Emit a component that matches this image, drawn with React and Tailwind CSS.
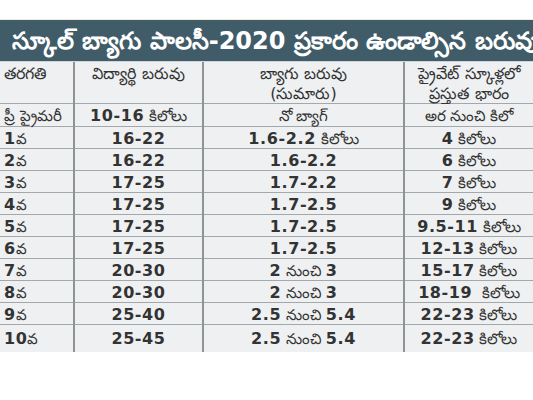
import React from 'react';

const rows = [
    ['ప్రీ ప్రైమరీ', '10-16 కిలోలు', 'నో బ్యాగ్', 'అర నుంచి కిలో'],
    ['1వ', '16-22', '1.6-2.2 కిలోలు', '4 కిలోలు'],
    ['2వ', '16-22', '1.6-2.2', '6 కిలోలు'],
    ['3వ', '17-25', '1.7-2.2', '7 కిలోలు'],
    ['4వ', '17-25', '1.7-2.5', '9 కిలోలు'],
    ['5వ', '17-25', '1.7-2.5', '9.5-11 కిలోలు'],
    ['6వ', '17-25', '1.7-2.5', '12-13 కిలోలు'],
    ['7వ', '20-30', '2 నుంచి 3', '15-17 కిలోలు'],
    ['8వ', '20-30', '2 నుంచి 3', '18-19  కిలోలు'],
    ['9వ', '25-40', '2.5 నుంచి 5.4', '22-23 కిలోలు'],
    ['10వ', '25-45', '2.5 నుంచి 5.4', '22-23 కిలోలు'],
];

const cols = 'grid grid-cols-[75px_129px_201px_1fr]';

// digits bold, telugu words regular
const Cell = ({ text }) => {
    const parts = text.split(/([0-9.\-]+)/).filter(Boolean);
    return (
        <span className="whitespace-pre">
            {parts.map((p, i) =>
                /^[0-9.\-]+$/.test(p)
                    ? <span key={i} className="font-bold text-[16px] tracking-[0.6px]">{p}</span>
                    : <span key={i} className="font-normal text-[15px]">{p}</span>
            )}
        </span>
    );
};

const App = () => {
    return (
        <div className="w-[533px] h-[400px] bg-white overflow-hidden text-[#333] font-['DejaVu_Sans','Noto_Sans',sans-serif]">
            {/* top strip, cut off line of the article */}
            <div className="h-[20px] border-b border-[#f1ecda]" />

            {/* title bar */}
            <div className="h-[42px] bg-[#3f5c68] flex items-center pl-3 overflow-hidden border-b border-[#cfd6d9]">
                <h1 className="text-white text-[24px] font-bold whitespace-nowrap leading-none">
                    స్కూల్ బ్యాగు పాలసీ-2020 ప్రకారం ఉండాల్సిన బరువు
                </h1>
            </div>

            {/* table */}
            <div className="bg-[#eef0f1]">
                <div className={`${cols} h-[42px] border-b border-[#a3a8ab] text-[16px] leading-[20px]`}>
                    <div className="border-r-2 border-[#8e9396] pl-1 pt-0.5 whitespace-nowrap">తరగతి</div>
                    <div className="border-r-2 border-[#8e9396] text-center pt-0.5 whitespace-nowrap">విద్యార్థి బరువు</div>
                    <div className="border-r-2 border-[#8e9396] text-center pt-0.5">
                        <div>బ్యాగు బరువు</div>
                        <div>(సుమారు)</div>
                    </div>
                    <div className="text-center pt-0.5 whitespace-nowrap">
                        <div>ప్రైవేట్ స్కూళ్లలో</div>
                        <div>ప్రస్తుత భారం</div>
                    </div>
                </div>
                {rows.map((r, i) => (
                    <div
                        key={i}
                        className={`${cols} ${i === 0 ? 'h-[23px]' : 'h-[22px]'} ${i === rows.length - 1 ? 'h-[27px]' : 'border-b border-[#a3a8ab]'} items-stretch`}
                    >
                        <div className="border-r-2 border-[#8e9396] pl-1 flex items-center whitespace-nowrap"><Cell text={r[0]} /></div>
                        <div className="border-r-2 border-[#8e9396] flex items-center justify-center whitespace-nowrap"><Cell text={r[1]} /></div>
                        <div className="border-r-2 border-[#8e9396] flex items-center justify-center whitespace-nowrap"><Cell text={r[2]} /></div>
                        <div className="flex items-center justify-center whitespace-nowrap"><Cell text={r[3]} /></div>
                    </div>
                ))}
            </div>
        </div>
    );
};

export default App;
